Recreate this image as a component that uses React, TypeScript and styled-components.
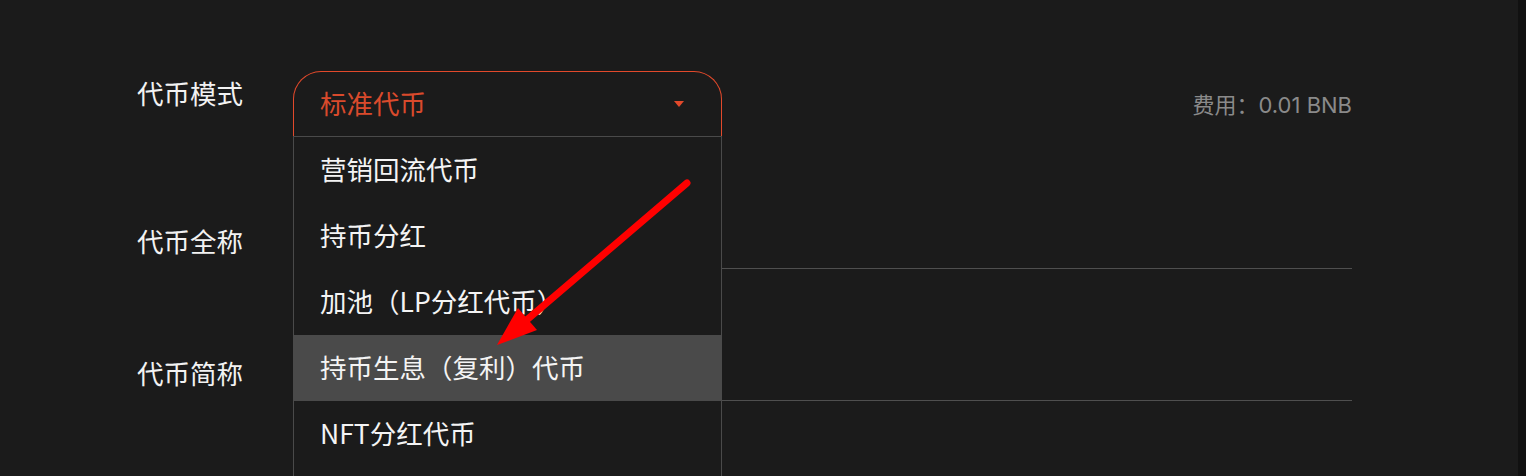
import React from "react";
import styled, { createGlobalStyle } from "styled-components";

const Global = createGlobalStyle`
  html, body { margin: 0; padding: 0; background: #1b1b1b; overflow: hidden; }
  body { font-family: "Noto Sans CJK SC", "Noto Sans", sans-serif; }
`;

const Page = styled.div`
  display: flex;
  width: 1526px;
  height: 476px;
  background: #1b1b1b;
  position: relative;
  overflow: hidden;
`;

const Main = styled.main`
  flex: 1;
  padding: 71px 0 0 137px;
  box-sizing: border-box;
`;

const ScrollTrack = styled.div`
  width: 8px;
  background: #111111;
`;

const Form = styled.div`
  width: 1215px;
  display: flex;
  flex-direction: column;
  gap: 82px;
`;

const Row = styled.div`
  display: grid;
  grid-template-columns: 156px 1fr;
  align-items: start;
`;

const Label = styled.div`
  color: #f2f2f2;
  font-size: 26.5px;
  line-height: 30px;
  padding-top: 7px;
`;

const Control = styled.div`
  display: flex;
  align-items: flex-start;
  justify-content: space-between;
  position: relative;
  min-height: 66px;
`;

const SelectWrap = styled.div`
  position: relative;
  width: 429px;
`;

const SelectHead = styled.div`
  height: 65px;
  box-sizing: border-box;
  border: 1px solid #e2492b;
  border-bottom: none;
  border-radius: 28px 28px 0 0;
  display: flex;
  align-items: center;
  justify-content: space-between;
  padding: 0 37px 4px 26px;
  color: #d94a2c;
  font-size: 26.5px;
`;

const Caret = styled.span`
  width: 0;
  height: 0;
  border-left: 5px solid transparent;
  border-right: 5px solid transparent;
  border-top: 6px solid #e2492b;
  margin-top: 4px;
`;

const Menu = styled.ul`
  position: absolute;
  left: 0;
  top: 65px;
  width: 100%;
  box-sizing: border-box;
  margin: 0;
  padding: 0 0 40px;
  list-style: none;
  background: #1b1b1b;
  border: 1px solid #4a4a4a;
  border-bottom: none;
  z-index: 2;
`;

const MenuItem = styled.li<{ $active?: boolean }>`
  height: 66px;
  box-sizing: border-box;
  display: flex;
  align-items: center;
  padding: 0 0 4px 26px;
  color: #f4f4f4;
  font-size: 26.5px;
  background: ${(p) => (p.$active ? "#4a4a4a" : "transparent")};
`;

const Fee = styled.div`
  color: #8a8a8a;
  font-size: 22px;
  line-height: 30px;
  font-family: "Inter", "Noto Sans CJK SC", sans-serif;
  padding-top: 19px;
`;

const InputLine = styled.div`
  height: 50px;
  box-sizing: border-box;
  border-bottom: 1px solid #4f4f4f;
`;

const Arrow = styled.svg`
  position: absolute;
  left: 0;
  top: 0;
  pointer-events: none;
  z-index: 5;
`;

const items = ["营销回流代币", "持币分红", "加池（LP分红代币）", "持币生息（复利）代币", "NFT分红代币"];

export default function App() {
  return (
    <Page>
      <Global />
      <Main>
        <Form>
          <Row>
            <Label>代币模式</Label>
            <Control>
              <SelectWrap>
                <SelectHead>
                  <span>标准代币</span>
                  <Caret />
                </SelectHead>
                <Menu>
                  {items.map((t, i) => (
                    <MenuItem key={t} $active={i === 3}>
                      {t}
                    </MenuItem>
                  ))}
                </Menu>
              </SelectWrap>
              <Fee>费用：0.01 BNB</Fee>
            </Control>
          </Row>
          <Row>
            <Label>代币全称</Label>
            <InputLine />
          </Row>
          <Row>
            <Label>代币简称</Label>
            <InputLine />
          </Row>
        </Form>
      </Main>
      <ScrollTrack />
      <Arrow width="1526" height="476" viewBox="0 0 1526 476">
        <line x1="687" y1="183" x2="522" y2="324" stroke="#ff0000" strokeWidth="7" strokeLinecap="round" />
        <polygon points="497,345 518,308 537,330" fill="#ff0000" />
      </Arrow>
    </Page>
  );
}
